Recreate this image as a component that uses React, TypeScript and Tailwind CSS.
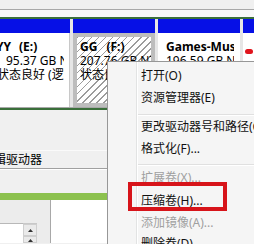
import React from "react";

const Hatch =
  "bg-[image:repeating-linear-gradient(135deg,#9c9c9c_0px,#9c9c9c_1px,#ffffff_1px,#ffffff_5px)]";

function Menu() {
  const items: { t: string; h: number; dis?: boolean; sep?: boolean }[] = [
    { t: "打开(O)", h: 22 },
    { t: "资源管理器(E)", h: 22 },
    { t: "", h: 8, sep: true },
    { t: "更改驱动器号和路径(C)...", h: 20 },
    { t: "格式化(F)...", h: 23 },
    { t: "", h: 7, sep: true },
    { t: "扩展卷(X)...", h: 22, dis: true },
    { t: "压缩卷(H)...", h: 23 },
    { t: "添加镜像(A)...", h: 21, dis: true },
    { t: "删除卷(D)...", h: 22 },
  ];
  return (
    <div className="absolute left-[107px] top-[61px] w-[170px] h-[200px] border border-[#979797] bg-[#f5f5f5] flex">
      <div className="w-[29px] shrink-0 border-r border-[#e2e3e3]" />
      <div className="w-px bg-white shrink-0" />
      <div className="flex-1 flex flex-col pt-[3px]">
        {items.map((it, i) =>
          it.sep ? (
            <div key={i} style={{ height: it.h }} className="flex flex-col justify-end pb-[1px]">
              <div className="h-px bg-[#e0e0e0]" />
              <div className="h-px bg-white" />
            </div>
          ) : (
            <div
              key={i}
              style={{ height: it.h }}
              className={
                "flex items-center pl-[3px] whitespace-nowrap leading-none " +
                (it.dis ? "text-[#a0a0a0]" : "text-[#111]")
              }
            >
              {it.t}
            </div>
          )
        )}
      </div>
    </div>
  );
}

export default function App() {
  return (
    <div className="relative w-[254px] h-[244px] overflow-hidden bg-[#f0f0f0] text-[12px] text-black font-[family-name:'Noto_Sans','Noto_Sans_CJK_SC',sans-serif]">
      <div className="h-[9px] bg-[#f0f0f0]" />
      <div className="h-px bg-[#a8a8a8]" />
      <div className="h-[7px] bg-[#f8f8f8]" />
      <div className="h-[2px] bg-[#3a6f3a]" />
      {/* partitions row */}
      <div className="flex h-[88px] bg-[#e6e6e6]">
        {/* E */}
        <div className="w-[70px] flex flex-col shrink-0">
          <div className="h-[14px] bg-[#0610e6]" />
          <div className="flex-1 bg-white border-r border-[#c8c8c8] pr-[5px]">
            <div className="overflow-hidden h-full pt-[7px] leading-[14px] whitespace-nowrap ml-[-4px]">
              <div className="font-bold">
                <span>YY</span>
                <span className="ml-[8px]">(E:)</span>
              </div>
              <div className="ml-[10px]">95.37 GB NTFS</div>
              <div className="ml-[1px]">状态良好 (逻辑驱动器)</div>
            </div>
          </div>
        </div>
        <div className="w-[3px] shrink-0" />
        {/* F */}
        <div className="w-[82px] flex flex-col shrink-0">
          <div className="h-[14px] bg-[#0610e6]" />
          <div className={"flex-1 border-[4px] border-[#bdbdbd] pl-[3px] " + Hatch}>
            <div className="overflow-hidden h-full pt-[3px] leading-[14px] whitespace-nowrap">
              <div className="font-bold">
                <span>GG</span>
                <span className="ml-[9px]">(F:)</span>
              </div>
              <div>207.76 GB NTFS</div>
              <div>状态良好 (逻辑驱动器)</div>
            </div>
          </div>
        </div>
        <div className="w-[3px] shrink-0" />
        {/* Games */}
        <div className="w-[82px] flex flex-col shrink-0">
          <div className="h-[14px] bg-[#0610e6]" />
          <div className="flex-1 bg-white border-[4px] border-white pl-[4px] pr-[2px]">
            <div className="overflow-hidden h-full pt-[3px] leading-[14px] whitespace-nowrap">
              <div className="font-bold">Games-Music</div>
              <div>196.59 GB NTFS</div>
              <div>状态良好 (逻辑驱动器)</div>
            </div>
          </div>
        </div>
        <div className="w-[3px] shrink-0" />
        {/* last */}
        <div className="flex-1 flex flex-col">
          <div className="h-[14px] bg-[#0610e6]" />
          <div className="flex-1 bg-white pl-[2px] pt-[16px] overflow-hidden">
            <div className="w-[8px] h-[5px] rounded-full bg-[#e0141c]" />
            <div className="ml-[5px] mt-[6px] leading-[13px] text-[#444]">0</div>
          </div>
        </div>
      </div>
      <div className="h-px bg-[#a8a8a8]" />
      <div className="h-[2px] bg-[#3a6f3a]" />
      <div className="h-[40px] bg-[#f0f0f0]" />
      {/* legend row */}
      <div className="h-[19px] border-t border-[#fafafa] border-b border-b-[#a0a0a0] flex items-center overflow-hidden">
        <span className="ml-[-18px] whitespace-nowrap leading-none">逻辑驱动器</span>
      </div>
      <div className="h-px bg-white" />
      <div className="h-[23px] bg-[#f0f0f0]" />
      <div className="h-[7px] bg-[#8cc14e]" />
      {/* bottom */}
      <div className="flex h-[43px]">
        <div className="w-[50px] bg-[#ececec] flex flex-col">
          <div className="h-[24px]" />
          <div className="flex flex-1">
            <div className="w-[23px] bg-white border-t border-[#b8b8b8]" />
            <div className="w-[14px] flex flex-col border-t border-[#c8c8c8]">
              <div className="h-[12px] bg-[#eaeaea] border border-[#cfcfcf] flex items-center justify-center">
                <svg width="5" height="3" viewBox="0 0 5 3">
                  <path d="M0 3 L2.5 0 L5 3 Z" fill="#333" />
                </svg>
              </div>
              <div className="flex-1 bg-[#eaeaea] border border-[#cfcfcf] flex items-start justify-center pt-[2px]">
                <svg width="5" height="3" viewBox="0 0 5 3">
                  <path d="M0 3 L2.5 0 L5 3 Z" fill="#333" />
                </svg>
              </div>
            </div>
          </div>
        </div>
        <div className="w-px bg-[#a8a8a8]" />
        <div className="flex-1 bg-white" />
      </div>
      <Menu />
      <div className="absolute left-[128px] top-[182px] w-[99px] h-[29px] border-[4px] border-[#d7141a]" />
    </div>
  );
}
